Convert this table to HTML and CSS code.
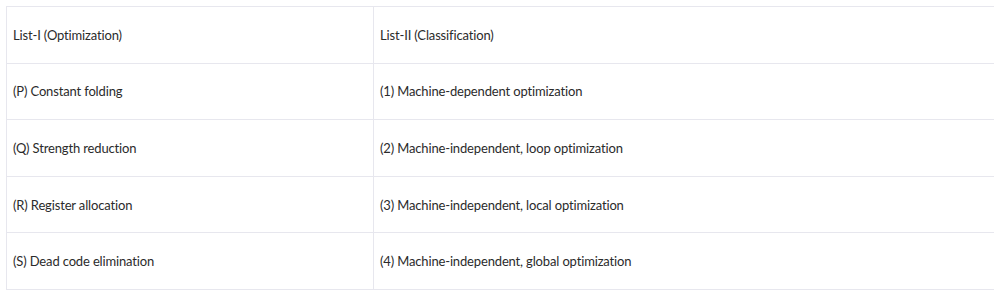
FILE: index.html
```html
<!DOCTYPE html>
<html>
<head>
<meta charset="utf-8">
<link rel="stylesheet" href="styles.css">
</head>
<body>
<table class="match-table">
  <tr><td class="col-a">List-I (Optimization)</td><td class="col-b">List-II (Classification)</td></tr>
  <tr><td class="col-a">(P) Constant folding</td><td class="col-b">(1) Machine-dependent optimization</td></tr>
  <tr><td class="col-a">(Q) Strength reduction</td><td class="col-b">(2) Machine-independent, loop optimization</td></tr>
  <tr><td class="col-a">(R) Register allocation</td><td class="col-b">(3) Machine-independent, local optimization</td></tr>
  <tr><td class="col-a">(S) Dead code elimination</td><td class="col-b">(4) Machine-independent, global optimization</td></tr>
</table>
</body>
</html>
```
FILE: styles.css
```css
html, body {
  background: #ffffff;
}
body {
  margin: 6px;
  font-family: Lato, "Open Sans", sans-serif;
  font-size: 13px;
  letter-spacing: -0.15px;
  color: #2b2b2b;
}
.match-table {
  width: 990px;
  border-collapse: collapse;
}
.match-table tr {
  height: 56.6px;
}
.match-table td {
  border: 1px solid #e7e7ee;
  padding: 0 6px;
  vertical-align: middle;
}
.col-a {
  width: 354px;
}
```
